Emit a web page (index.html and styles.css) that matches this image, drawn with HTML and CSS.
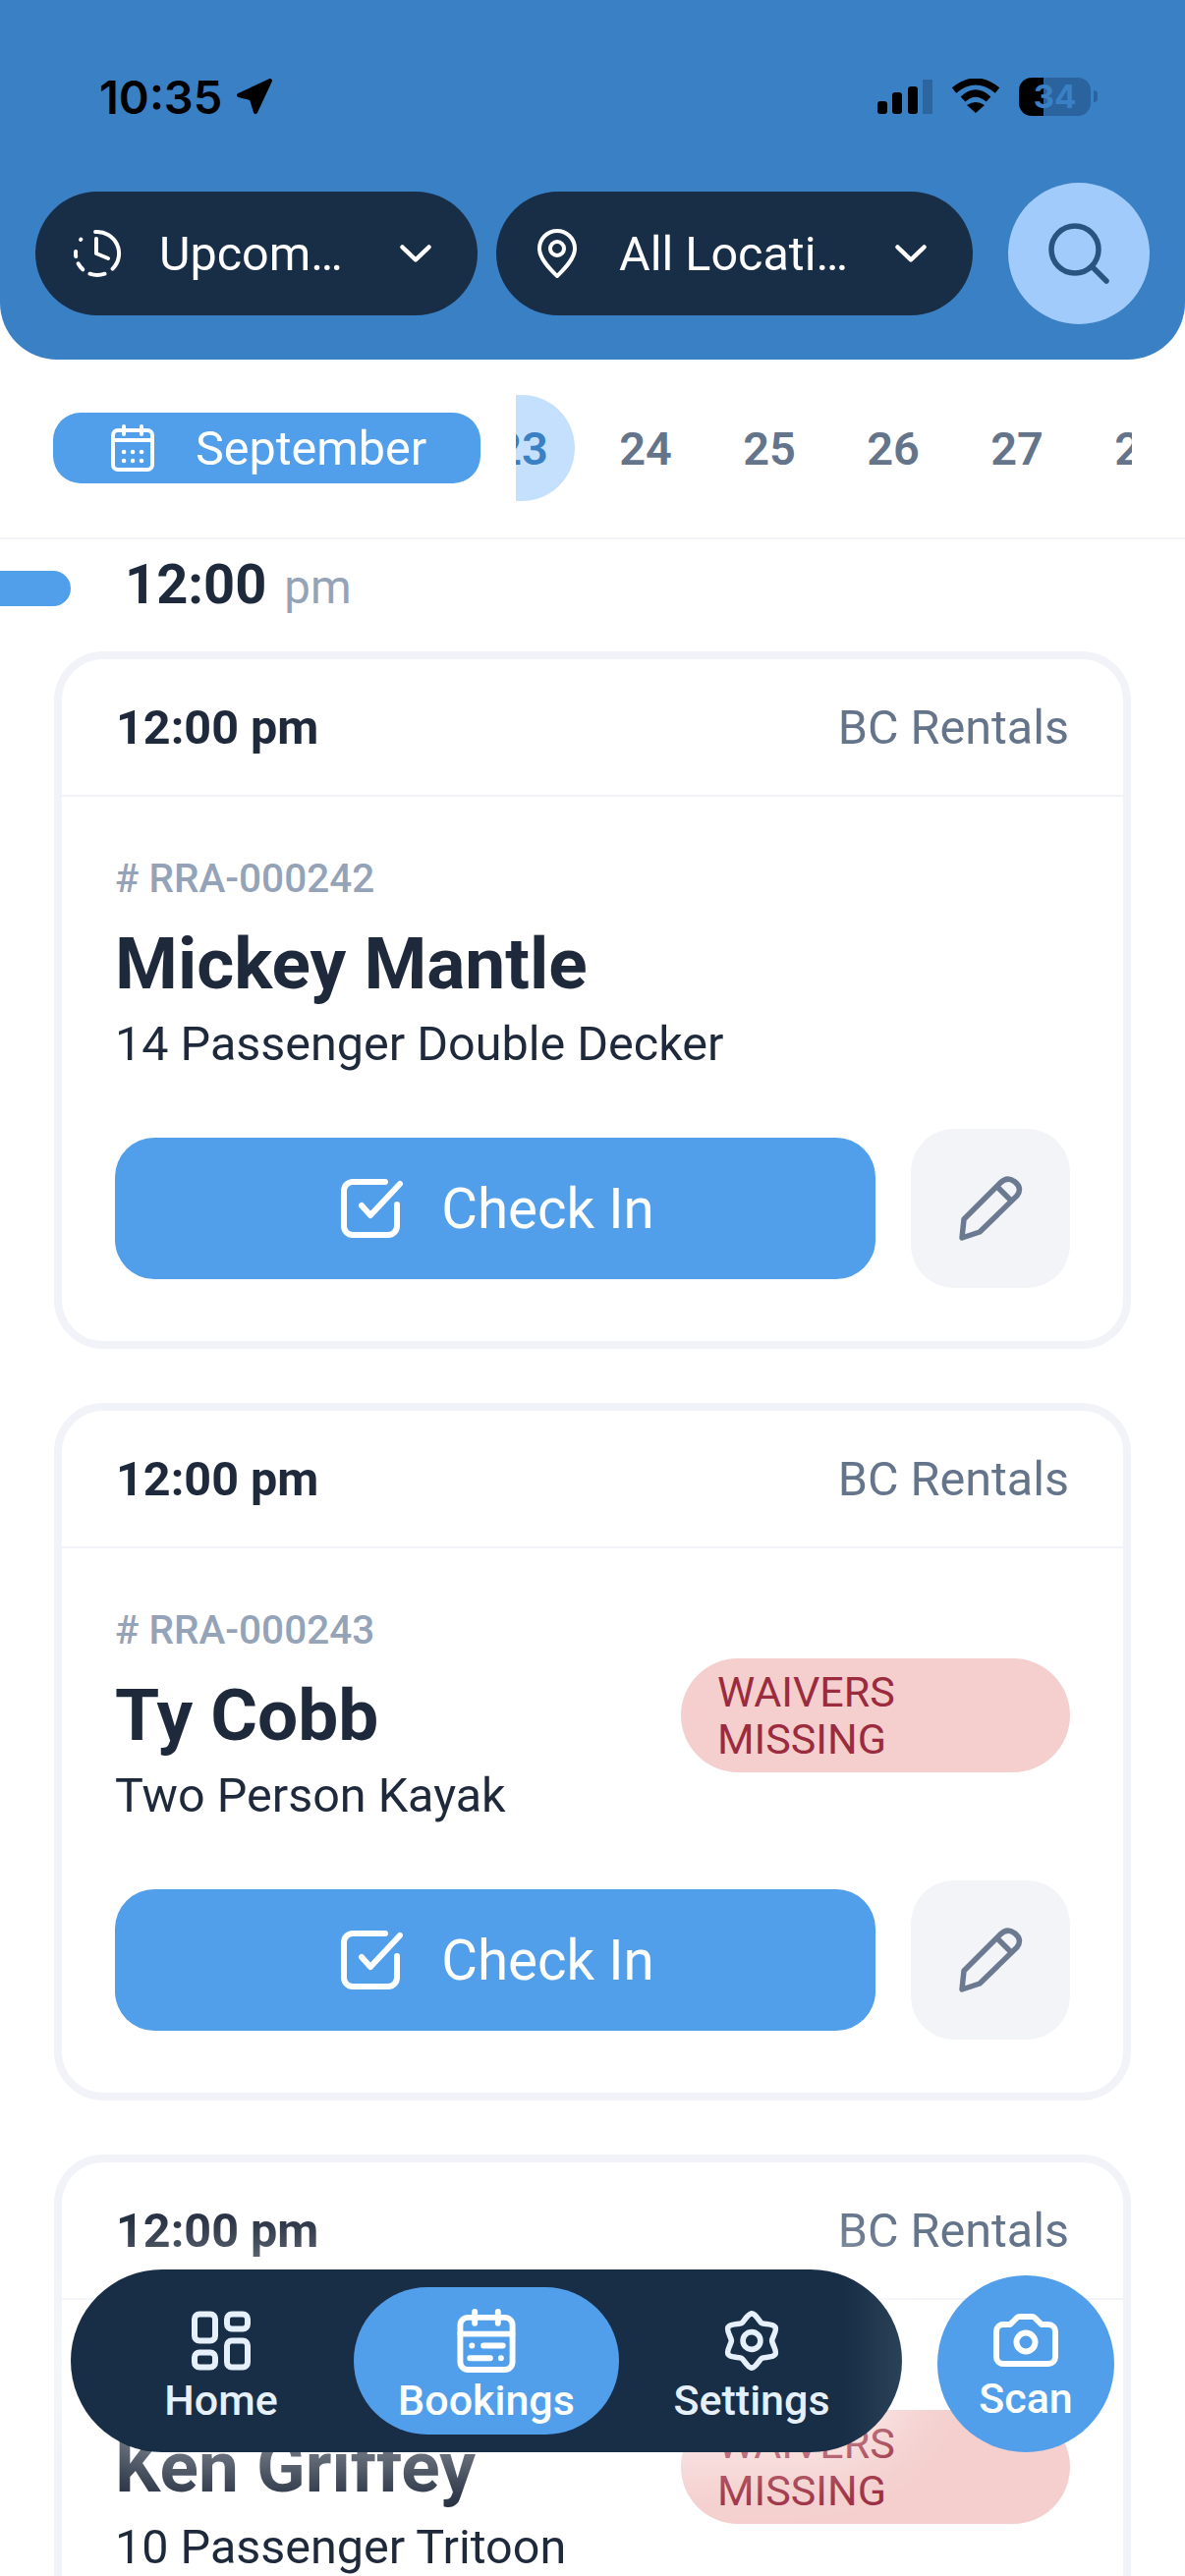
FILE: index.html
```html
<!DOCTYPE html>
<html lang="en">
<head>
    <meta charset="UTF-8">
    <meta name="viewport" content="width=device-width, initial-scale=1.0">
    <title>Bookings</title>
    <link rel="stylesheet" href="styles.css">
</head>
<body>
    <header class="top">
        <div class="status">
            <div class="status-left">
                <span class="clock">10:35</span>
                <svg class="arrow" viewBox="0 0 36 36"><path d="M33 3 L3 17 L15 20 L19 33 Z"/></svg>
            </div>
            <div class="status-right">
                <div class="signal">
                    <span class="bar bar-1"></span>
                    <span class="bar bar-2"></span>
                    <span class="bar bar-3"></span>
                    <span class="bar bar-4"></span>
                </div>
                <svg class="wifi" viewBox="0 0 50 36">
                    <path d="M3 12 Q25 -6 47 12" fill="none" stroke="#000" stroke-width="7"/>
                    <path d="M12 21 Q25 9 38 21" fill="none" stroke="#000" stroke-width="7"/>
                    <path d="M25 35 L16 27 Q25 21 34 27 Z"/>
                </svg>
                <div class="battery">34</div>
                <span class="battery-tip"></span>
            </div>
        </div>
        <div class="filters">
            <button class="filter filter-time">
                <svg class="filter-icon" viewBox="0 0 50 50" fill="none" stroke="#fff" stroke-width="4" stroke-linecap="round" stroke-linejoin="round">
                    <path d="M23.1 3.1 A22 22 0 0 1 40.6 40.6"/>
                    <path d="M32.5 45.7 A22 22 0 0 1 17.5 45.7"/>
                    <path d="M10.3 41.3 A22 22 0 0 1 5.6 35.3"/>
                    <path d="M3.2 28.1 A22 22 0 0 1 3.1 23.1"/>
                    <path d="M8.1 10.9 L8.4 10.5"/>
                    <path d="M24 10 V25 L36 30"/>
                </svg>
                <span class="filter-label">Upcoming</span>
                <svg class="chevron" viewBox="0 0 32 18" fill="none" stroke="#fff" stroke-width="4.5" stroke-linecap="round" stroke-linejoin="round"><path d="M2.5 2.5 L16 15.5 L29.5 2.5"/></svg>
            </button>
            <button class="filter filter-place">
                <svg class="filter-icon pin" viewBox="0 0 40 50" fill="none" stroke="#fff" stroke-width="4" stroke-linejoin="round">
                    <path d="M20 2 A18 18 0 0 1 38 20 C38 31 26 42 20 48 C14 42 2 31 2 20 A18 18 0 0 1 20 2 Z"/>
                    <circle cx="20" cy="20" r="7"/>
                </svg>
                <span class="filter-label">All Locations</span>
                <svg class="chevron" viewBox="0 0 32 18" fill="none" stroke="#fff" stroke-width="4.5" stroke-linecap="round" stroke-linejoin="round"><path d="M2.5 2.5 L16 15.5 L29.5 2.5"/></svg>
            </button>
            <button class="search">
                <svg viewBox="0 0 66 66" fill="none" stroke="#28547f" stroke-width="5.5" stroke-linecap="round"><circle cx="29" cy="29" r="24"/><path d="M47 47 L61 61"/></svg>
            </button>
        </div>
    </header>

    <div class="dates">
        <div class="month">
            <svg viewBox="0 0 44 48" fill="none" stroke="#fff" stroke-width="4" stroke-linecap="round">
                <rect x="2" y="6" width="40" height="40" rx="5"/>
                <path d="M2 16 H42 M13 2 V10 M31 2 V10"/>
                <path d="M13 28 H13.1 M22 28 H22.1 M31 28 H31.1 M13 37 H13.1 M22 37 H22.1 M31 37 H31.1" stroke-width="4.5"/>
            </svg>
            <span class="month-name">September</span>
        </div>
        <div class="days">
            <div class="days-track">
                <div class="day active"><span>23</span></div>
                <div class="day"><span>24</span></div>
                <div class="day"><span>25</span></div>
                <div class="day"><span>26</span></div>
                <div class="day"><span>27</span></div>
                <div class="day"><span>28</span></div>
            </div>
        </div>
    </div>

    <div class="slot">
        <span class="slot-tab"></span>
        <div class="slot-time">12:00 <small>pm</small></div>
    </div>

    <main class="list">
        <article class="card">
            <div class="card-head">
                <span class="card-time">12:00 pm</span>
                <span class="card-place">BC Rentals</span>
            </div>
            <div class="card-body">
                <div class="info">
                    <div class="info-text">
                        <div class="ref"># RRA-000242</div>
                        <div class="name">Mickey Mantle</div>
                        <div class="item">14 Passenger Double Decker</div>
                    </div>
                </div>
                <div class="actions">
                    <button class="checkin">
                        <svg viewBox="0 0 63 60" fill="none" stroke="#fff" stroke-width="6" stroke-linecap="round" stroke-linejoin="round"><path d="M45 3 H12 A9 9 0 0 0 3 12 V48 A9 9 0 0 0 12 57 H48 A9 9 0 0 0 57 48 V26"/><path d="M21 27 L30 37 L60 5"/></svg>
                        <span class="checkin-label">Check In</span>
                    </button>
                    <button class="edit">
                        <svg viewBox="0 0 66 66" fill="none" stroke="#6b7a90" stroke-width="5.5" stroke-linejoin="round"><path d="M6 44 L43 7 C48 2 53 2 58 6 C63 10 64 15 60 20 L22 57 L4 63 Z"/><path d="M40 11 L54 25"/></svg>
                    </button>
                </div>
            </div>
        </article>

        <article class="card">
            <div class="card-head">
                <span class="card-time">12:00 pm</span>
                <span class="card-place">BC Rentals</span>
            </div>
            <div class="card-body">
                <div class="info">
                    <div class="info-text">
                        <div class="ref"># RRA-000243</div>
                        <div class="name">Ty Cobb</div>
                        <div class="item">Two Person Kayak</div>
                    </div>
                    <div class="badge">WAIVERS MISSING</div>
                </div>
                <div class="actions">
                    <button class="checkin">
                        <svg viewBox="0 0 63 60" fill="none" stroke="#fff" stroke-width="6" stroke-linecap="round" stroke-linejoin="round"><path d="M45 3 H12 A9 9 0 0 0 3 12 V48 A9 9 0 0 0 12 57 H48 A9 9 0 0 0 57 48 V26"/><path d="M21 27 L30 37 L60 5"/></svg>
                        <span class="checkin-label">Check In</span>
                    </button>
                    <button class="edit">
                        <svg viewBox="0 0 66 66" fill="none" stroke="#6b7a90" stroke-width="5.5" stroke-linejoin="round"><path d="M6 44 L43 7 C48 2 53 2 58 6 C63 10 64 15 60 20 L22 57 L4 63 Z"/><path d="M40 11 L54 25"/></svg>
                    </button>
                </div>
            </div>
        </article>

        <article class="card">
            <div class="card-head">
                <span class="card-time">12:00 pm</span>
                <span class="card-place">BC Rentals</span>
            </div>
            <div class="card-body">
                <div class="info">
                    <div class="info-text">
                        <div class="ref"># RRA-000244</div>
                        <div class="name">Ken Griffey</div>
                        <div class="item">10 Passenger Tritoon</div>
                    </div>
                    <div class="badge">WAIVERS MISSING</div>
                </div>
            </div>
        </article>
    </main>

    <div class="dock">
        <nav class="tabs">
            <a class="tab">
                <svg class="tab-icon" viewBox="0 0 60 60" fill="none" stroke="#e6f0fb" stroke-width="6">
                    <rect x="3" y="3" width="21" height="27" rx="5"/>
                    <rect x="36" y="3" width="21" height="15" rx="5"/>
                    <rect x="3" y="42" width="21" height="15" rx="5"/>
                    <rect x="36" y="30" width="21" height="27" rx="5"/>
                </svg>
                <span>Home</span>
            </a>
            <a class="tab tab-active">
                <svg class="tab-icon" viewBox="0 0 60 66" fill="none" stroke="#fff" stroke-width="6" stroke-linecap="round">
                    <rect x="3" y="9" width="54" height="54" rx="8"/>
                    <path d="M3 26 H57 M18 3 V15 M42 3 V15"/>
                    <path d="M15 38 H15.1 M27 38 H47 M13 51 H34 M45 51 H45.1"/>
                </svg>
                <span>Bookings</span>
            </a>
            <a class="tab">
                <svg class="tab-icon" viewBox="0 0 64 64" fill="none" stroke="#e6f0fb" stroke-width="6">
                    <path d="M32 2.5 C36.5 2.5 40.4 11.45 43 12.95 C45.6 14.45 55.3 13.35 57.55 17.25 C59.8 21.15 54 29 54 32 C54 35 59.8 42.85 57.55 46.75 C55.3 50.65 45.6 49.55 43 51.05 C40.4 52.55 36.5 61.5 32 61.5 C27.5 61.5 23.6 52.55 21 51.05 C18.4 49.55 8.7 50.65 6.45 46.75 C4.2 42.85 10 35 10 32 C10 29 4.2 21.15 6.45 17.25 C8.7 13.35 18.4 14.45 21 12.95 C23.6 11.45 27.5 2.5 32 2.5 Z"/>
                    <circle cx="32" cy="32" r="9.5"/>
                </svg>
                <span>Settings</span>
            </a>
        </nav>
        <a class="scan">
            <svg class="scan-icon" viewBox="0 0 66 54" fill="none" stroke="#fff" stroke-width="6" stroke-linejoin="round">
                <path d="M10 11 H17 L24 4 C25 3 26 3 27 3 H39 C40 3 41 3 42 4 L49 11 H56 A7 7 0 0 1 63 18 V44 A7 7 0 0 1 56 51 H10 A7 7 0 0 1 3 44 V18 A7 7 0 0 1 10 11 Z"/>
                <circle cx="33" cy="29" r="9.5"/>
            </svg>
            <span>Scan</span>
        </a>
    </div>
</body>
</html>
```

FILE: styles.css
```css
* {
    box-sizing: border-box;
}

body {
    margin: 0;
    padding: 0;
    width: 1206px;
    height: 2622px;
    overflow: hidden;
    position: relative;
    background-color: #fff;
    font-family: 'Roboto', sans-serif;
    color: #1e293b;
}

button {
    border: none;
    padding: 0;
    font-family: inherit;
}

svg {
    display: block;
    flex-shrink: 0;
}

/* Header */
.top {
    height: 366px;
    padding: 78px 36px 0;
    background-color: #3a80c5;
    border-radius: 0 0 58px 58px;
}

.status {
    display: flex;
    justify-content: space-between;
    align-items: center;
    height: 40px;
    padding: 0 53px 0 65px;
    margin-bottom: 68px;
}

.status-left {
    display: flex;
    align-items: center;
    gap: 14px;
}

.clock {
    font-family: 'Inter', sans-serif;
    font-size: 47px;
    font-weight: 600;
    color: #000;
}

.arrow {
    width: 38px;
    height: 38px;
    stroke: #000;
    stroke-width: 4;
    stroke-linejoin: round;
}

.status-right {
    display: flex;
    align-items: center;
}

.signal {
    display: flex;
    align-items: flex-end;
    gap: 5.5px;
    height: 35px;
    margin-right: 19px;
}

.bar {
    width: 10px;
    background-color: #000;
    border-radius: 3px;
}

.bar-1 { height: 13px; }
.bar-2 { height: 22px; }
.bar-3 { height: 28px; }
.bar-4 { height: 35px; background-color: #2d659f; border-radius: 1px; }

.wifi {
    width: 50px;
    height: 36px;
    margin-right: 19px;
}

.battery {
    width: 73px;
    height: 39px;
    border-radius: 13px;
    background: linear-gradient(to right, #000 25px, #2b639f 25px);
    color: #3a80c5;
    font-family: 'Inter', sans-serif;
    font-size: 33px;
    font-weight: 700;
    line-height: 39px;
    text-align: center;
}

.battery-tip {
    width: 4px;
    height: 12px;
    margin-left: 3px;
    background-color: #2b639f;
    border-radius: 0 4px 4px 0;
}

.filters {
    display: flex;
    align-items: center;
}

.filter {
    display: flex;
    align-items: center;
    height: 126px;
    background-color: #182d46;
    border-radius: 63px;
    color: #fff;
}

.filter-time {
    width: 450px;
    padding: 0 47px 0 38px;
    margin-right: 19px;
}

.filter-place {
    width: 485px;
    padding: 0 47px 0 42px;
    margin-right: 36px;
}

.filter-icon {
    width: 50px;
    height: 50px;
    margin-right: 38px;
}

.filter-icon.pin {
    width: 40px;
    margin-right: 43px;
}

.filter-label {
    flex: 1;
    min-width: 0;
    font-size: 48.5px;
    text-align: left;
    white-space: nowrap;
    overflow: hidden;
    text-overflow: ellipsis;
}

.chevron {
    width: 32px;
    height: 18px;
    margin-left: 30px;
}

.filter-time .chevron {
    margin-left: 55px;
}

.search {
    display: flex;
    align-items: center;
    justify-content: center;
    width: 144px;
    height: 144px;
    border-radius: 50%;
    background-color: #a0cbfa;
}

.search svg {
    width: 66px;
    height: 66px;
}

/* Date strip */
.dates {
    display: flex;
    align-items: center;
    height: 183px;
    padding: 0 0 2px 54px;
    border-bottom: 2px solid #f1f3f8;
}

.month {
    display: flex;
    align-items: center;
    gap: 42px;
    width: 435px;
    height: 72px;
    padding-left: 59px;
    background-color: #519fea;
    border-radius: 28px;
    color: #fff;
    font-size: 48.5px;
}

.month svg {
    width: 44px;
    height: 48px;
}

.month-name {
    padding-top: 2px;
}

.days {
    width: 627px;
    margin-left: 36px;
    overflow: hidden;
}

.days-track {
    display: flex;
    margin-left: -57px;
}

.day {
    flex: 0 0 126px;
    display: flex;
    align-items: center;
    justify-content: center;
    height: 108px;
    font-size: 47px;
    font-weight: 600;
    color: #64748b;
}

.day span {
    display: flex;
    align-items: center;
    justify-content: center;
    width: 108px;
    height: 108px;
    padding-top: 2px;
    border-radius: 50%;
}

.day.active span {
    background-color: #c5e0fc;
    color: #3a80c5;
}

/* Time slot */
.slot {
    display: flex;
    align-items: center;
    height: 100px;
    margin-bottom: 14px;
    gap: 55px;
}

.slot-tab {
    width: 72px;
    height: 36px;
    background-color: #519fea;
    border-radius: 0 18px 18px 0;
}

.slot-time {
    margin-top: -9px;
    font-size: 56px;
    font-weight: 700;
    color: #1e293b;
}

.slot-time small {
    margin-left: 4px;
    font-size: 47.5px;
    font-weight: 400;
    color: #94a3b8;
}

/* Booking cards */
.list {
    display: flex;
    flex-direction: column;
    gap: 55px;
    padding: 0 55px;
}

.card {
    flex-shrink: 0;
    height: 710px;
    border: 8px solid #f1f3f8;
    border-radius: 50px;
    background-color: #fff;
}

.card-head {
    display: flex;
    justify-content: space-between;
    align-items: center;
    height: 140px;
    padding: 0 55px;
    border-bottom: 2px solid #f1f3f8;
}

.card-time {
    font-size: 48.5px;
    font-weight: 700;
}

.card-place {
    font-size: 48.5px;
    color: #64748b;
}

.card-body {
    padding: 59px 54px 54px;
}

.info {
    display: flex;
    justify-content: space-between;
    align-items: center;
}

.ref {
    font-size: 40.5px;
    line-height: 48px;
    font-weight: 500;
    color: #94a3b8;
}

.name {
    margin-top: 21px;
    font-size: 73px;
    line-height: 84px;
    font-weight: 700;
}

.item {
    margin-top: 12px;
    font-size: 48.5px;
    line-height: 56px;
}

.badge {
    width: 396px;
    padding: 10px 37px;
    background-color: #f4cfce;
    border-radius: 58px;
    color: #9b2c3e;
    font-size: 43px;
    line-height: 48px;
}

.actions {
    display: flex;
    align-items: center;
    gap: 36px;
    margin-top: 58px;
}

.checkin {
    flex: 1;
    display: flex;
    align-items: center;
    justify-content: center;
    gap: 39px;
    height: 144px;
    padding-left: 5px;
    background-color: #519fea;
    border-radius: 40px;
    color: #fff;
    font-size: 56.5px;
}

.checkin svg {
    width: 63px;
    height: 60px;
}

.checkin-label {
    padding-top: 2px;
}

.edit {
    display: flex;
    align-items: center;
    justify-content: center;
    width: 162px;
    height: 162px;
    background-color: #f3f4f8;
    border-radius: 44px;
}

.edit svg {
    width: 66px;
    height: 66px;
}

/* Bottom dock, floats over the list */
.dock {
    position: absolute;
    left: 72px;
    bottom: 126px;
    display: flex;
    align-items: flex-end;
    gap: 36px;
}

.tabs {
    display: flex;
    width: 846px;
    height: 186px;
    padding: 18px;
    background: linear-gradient(to right, #182d46 93%, #2a4257 100%);
    border-radius: 93px;
    box-shadow: 0 0 60px 20px rgba(255, 255, 255, 0.45);
}

.tab {
    flex: 0 0 270px;
    display: flex;
    flex-direction: column;
    align-items: center;
    justify-content: center;
    height: 150px;
    padding-top: 10px;
    border-radius: 75px;
    color: #e6f0fb;
    font-size: 43px;
    font-weight: 500;
    line-height: 48px;
}

.tab-active {
    background-color: #519fea;
    color: #fff;
}

.tab-icon {
    width: 60px;
    height: 65px;
    margin-bottom: 4px;
}

.scan {
    display: flex;
    flex-direction: column;
    align-items: center;
    justify-content: center;
    width: 180px;
    height: 180px;
    padding-top: 8px;
    border-radius: 50%;
    background-color: #519fea;
    color: #fff;
    font-size: 43px;
    font-weight: 500;
    line-height: 48px;
}

.scan-icon {
    width: 66px;
    height: 54px;
    margin-bottom: 8px;
}
```
